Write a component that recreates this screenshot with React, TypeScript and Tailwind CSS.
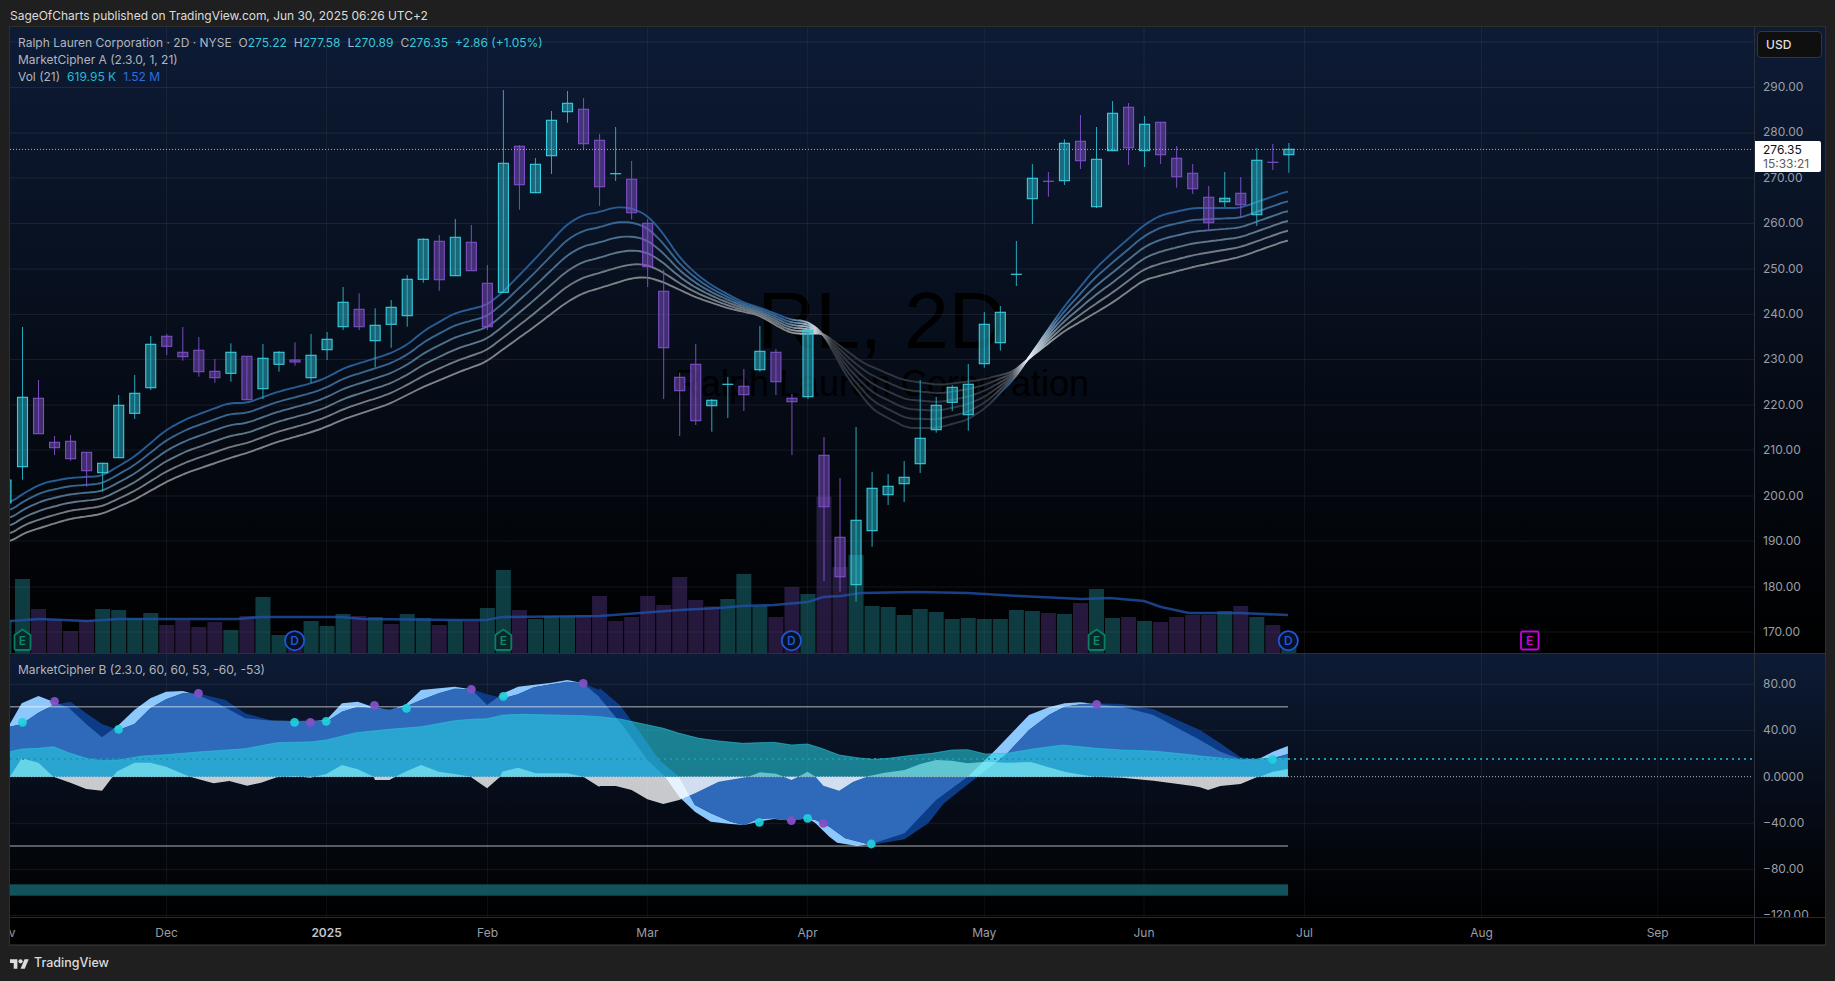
import React from "react";

type Pt = [number, number];

// trace helpers: points were read from 620px wide crops, so they get scaled back to page px
const crop = (pts: Pt[], x0: number, y0: number, sx = 2.529): Pt[] =>
  pts.map(([x, y]) => [x0 + x / sx, y0 + y / 3] as Pt);

const X = (i: number) => 22.5 + 16.03 * i;

// high, body top, body bottom, low, direction
const CANDLES: [number, number, number, number, "u" | "d"][] = [
  [327, 397.3, 466.7, 479.7, "u"], [380, 398.3, 433.7, 433.7, "d"], [436, 442.3, 447.7, 455, "d"], [435, 441.3, 458.7, 460.7, "d"],
  [452, 452.3, 470.7, 486.7, "d"], [462.7, 463.3, 472.7, 491.7, "u"], [395, 405.3, 457.7, 457.7, "u"], [375, 393.3, 413.3, 419, "u"],
  [336, 344.3, 387.7, 390, "u"], [334, 336.3, 346.3, 355, "d"], [327, 352.3, 356.7, 360.7, "d"], [337, 350.3, 371.7, 376.7, "d"],
  [359, 371.3, 377.7, 382.7, "d"], [343.3, 352.3, 373.3, 381.7, "u"], [356, 356.3, 399.7, 400, "d"], [344, 358.3, 388.7, 399, "u"],
  [351, 352.3, 364.3, 371.7, "u"], [342.3, 360, 362, 365.7, "d"], [334, 355.3, 377.7, 382.7, "u"], [332, 339.3, 349.7, 360, "u"],
  [287, 302.3, 326.7, 330, "u"], [293.3, 309.3, 326.7, 330, "d"], [308.3, 325.3, 340.7, 367.3, "u"], [300, 307.3, 324.3, 347.7, "u"],
  [275, 279.3, 315.7, 326.7, "u"], [238.3, 239.3, 279.3, 282.7, "u"], [235, 241.3, 279.7, 290.7, "d"], [219, 237.3, 275.7, 276, "u"],
  [225, 242.3, 270.7, 271, "d"], [265, 283.3, 326.7, 330, "d"], [90, 163.3, 292.3, 292.5, "u"], [145, 146.3, 184.7, 209.7, "d"],
  [158, 164.3, 192.7, 193, "u"], [111, 120.3, 155.7, 174, "u"], [91, 103.3, 111.7, 122.7, "u"], [98, 109.3, 143.7, 149.3, "d"],
  [134, 140.3, 186.7, 206, "d"], [127, 173.7, 173.7, 181, "u"], [161, 179.3, 212.7, 219.3, "d"], [219, 223.3, 266.7, 287, "d"],
  [270, 291.3, 347.7, 399, "d"], [372.7, 377.3, 390.7, 436, "d"], [344, 364.3, 420.7, 425, "d"], [399, 400.3, 405.7, 431.7, "u"],
  [377, 384.3, 384.3, 418, "u"], [369, 386.3, 394.7, 411, "d"], [326, 351.3, 369.7, 371.7, "u"], [349, 352.3, 381.7, 395, "d"],
  [394, 398.3, 401.7, 455, "d"], [324, 330.3, 396.7, 399, "u"], [437, 455.3, 506.7, 581, "d"], [478, 537.3, 576.7, 591.7, "d"],
  [427, 520.3, 584.7, 601.7, "u"], [472, 488.3, 530.7, 546.7, "u"], [474, 486.3, 494.7, 505, "u"], [461, 477.3, 483.7, 502, "u"],
  [380, 438.3, 463.7, 473, "u"], [397, 405.3, 429.7, 432.7, "u"], [385, 387.3, 402.3, 411, "u"], [364, 384.3, 414.7, 430.7, "u"],
  [312, 324.3, 363.7, 367.7, "u"], [306, 312.3, 342.7, 350.7, "u"], [241, 274.3, 274.3, 286, "u"], [164, 178.3, 198.7, 224, "u"],
  [172, 181.3, 181.3, 196.7, "d"], [139.3, 143.3, 180.7, 185, "u"], [115, 141.3, 160.7, 169, "d"], [127, 159.3, 206.7, 208, "u"],
  [101, 113.3, 150.7, 151, "u"], [103, 107.3, 147.7, 165, "d"], [116, 124.3, 150.7, 167, "u"], [122, 122.3, 154.7, 164, "d"],
  [146, 158.3, 176.7, 187.7, "d"], [164, 173.3, 188.7, 194, "d"], [186, 197.3, 222.7, 231, "d"], [172, 198.3, 201.7, 207, "u"],
  [177, 193.3, 204.7, 217.7, "d"], [148.3, 160.3, 214.7, 226, "u"], [144, 162.3, 162.3, 170, "d"], [143, 149.3, 154.7, 172.7, "u"],
];

// bar tops in crop rows, y = 330 + v / 3
const VOLUME: [number, "u" | "d"][] = [
  [747, "u"], [837, "d"], [867, "d"], [903, "d"], [870, "d"], [837, "u"], [840, "u"], [864, "u"], [849, "u"], [885, "d"],
  [870, "d"], [891, "d"], [876, "d"], [900, "u"], [858, "d"], [801, "u"], [915, "u"], [915, "d"], [873, "u"], [888, "u"],
  [852, "u"], [858, "d"], [861, "u"], [882, "d"], [852, "u"], [864, "u"], [885, "d"], [870, "u"], [873, "d"], [834, "u"],
  [720, "u"], [840, "d"], [867, "u"], [858, "u"], [858, "u"], [855, "d"], [798, "d"], [873, "d"], [861, "d"], [798, "d"],
  [825, "d"], [741, "d"], [810, "d"], [829, "d"], [807, "u"], [732, "u"], [828, "u"], [861, "d"], [771, "d"], [792, "u"],
  [500, "d"], [711, "d"], [675, "u"], [828, "u"], [831, "u"], [855, "u"], [837, "u"], [846, "u"], [867, "u"], [864, "u"],
  [867, "u"], [867, "u"], [840, "u"], [843, "u"], [849, "d"], [852, "u"], [819, "d"], [777, "u"], [864, "u"], [861, "d"],
  [873, "u"], [876, "d"], [861, "d"], [855, "d"], [855, "d"], [843, "u"], [828, "d"], [861, "u"], [885, "d"], [950, "u"],
];

const VOL_MA: Pt[] = [
  [10, 621], [40, 619], [87, 621], [119, 619], [237, 619], [261, 617], [340, 617], [364, 619], [459, 620], [486, 620], [502, 617],
  [600, 616], [640, 613], [679, 610], [719, 608], [742, 606], [774, 605], [808, 602], [823, 597], [841, 596], [861, 593], [916, 592],
  [968, 593], [1019, 596], [1082, 599], [1110, 598], [1144, 601], [1161, 607], [1189, 613], [1220, 613], [1240, 613], [1288, 615],
];

const RIBBON_TOP: Pt[] = [
  [10, 503], [24, 493], [43, 483], [69, 478], [102, 476], [134, 457], [166, 430], [186, 419], [229, 403], [247, 403], [277, 392],
  [312, 383], [326, 378], [344, 368], [389, 354], [407, 345], [425, 330], [455, 313], [487, 305], [503, 292], [534, 260], [567, 224],
  [583, 215], [600, 212], [615, 207], [631, 208], [647, 215], [663, 233], [679, 257], [695, 273], [711, 285], [742, 302], [758, 307],
  [774, 313], [791, 320], [807, 321], [823, 333], [847, 377], [873, 410], [907, 428], [937, 428], [967, 420], [987, 407], [1000, 393], [1015, 378],
  [1027, 360], [1063, 308], [1094, 270], [1112, 253], [1144, 225], [1161, 215], [1193, 208], [1240, 208], [1257, 202], [1288, 191],
];
const RIBBON_BOTTOM: Pt[] = [
  [10, 542], [24, 533], [43, 527], [69, 519], [102, 514], [134, 500], [166, 482], [186, 473], [233, 457], [247, 453], [277, 442],
  [312, 432], [326, 427], [344, 419], [389, 404], [423, 387], [459, 372], [486, 362], [502, 350], [530, 330], [567, 302], [583, 293],
  [600, 288], [632, 278], [647, 277], [663, 282], [695, 297], [727, 308], [758, 315], [790, 333], [807, 334], [823, 333], [863, 363],
  [903, 380], [940, 385], [980, 380], [1013, 372], [1027, 360], [1063, 332], [1112, 303], [1144, 280], [1193, 267], [1240, 257], [1288, 240],
];
const RIBBON_COLORS = ["#275c94", "#396690", "#4c6f8e", "#5f7789", "#727a82", "#7f8286"];

const interp = (pts: Pt[], x: number) => {
  if (x <= pts[0][0]) return pts[0][1];
  for (let i = 1; i < pts.length; i++) {
    if (x <= pts[i][0]) {
      const [x0, y0] = pts[i - 1];
      const [x1, y1] = pts[i];
      return y0 + ((y1 - y0) * (x - x0)) / (x1 - x0);
    }
  }
  return pts[pts.length - 1][1];
};

// rounds off the corners of the traced lines
const smooth = (pts: Pt[], x: number) => {
  let sum = 0;
  for (let d = -6; d <= 6; d += 3) sum += interp(pts, x + d);
  return sum / 5;
};

const line = (pts: Pt[]) => pts.map(([x, y], i) => `${i ? "L" : "M"}${x.toFixed(1)} ${y.toFixed(1)}`).join("");
const BASE = 776.7;
const area = (pts: Pt[]) => `M${pts[0][0].toFixed(1)} ${BASE}` + pts.map(([x, y]) => `L${x.toFixed(1)} ${y.toFixed(1)}`).join("") + `L${pts[pts.length - 1][0].toFixed(1)} ${BASE}Z`;
const stopAt = (x: number) => (x - 10) / 1278;

const WAVE_LEAD: Pt[] = [
  ...crop([[0, 222], [25, 222], [55, 160], [97, 138], [135, 155], [175, 175], [218, 222], [258, 262], [300, 225], [340, 180], [380, 145], [420, 125], [462, 123], [500, 135], [550, 160], [620, 205], [690, 212], [745, 213], [800, 212], [825, 210], [865, 160], [905, 155], [945, 172], [985, 180], [1025, 165], [1065, 120], [1150, 110], [1192, 118], [1232, 165], [1273, 130], [1310, 110], [1395, 98], [1435, 90], [1475, 100], [1515, 140]], 0, 650),
  ...crop([[0, 145], [60, 230], [120, 330], [165, 380], [200, 440], [240, 485], [280, 515], [330, 522], [365, 525], [400, 515], [440, 507], [484, 512], [525, 505], [545, 520], [580, 560], [600, 578], [650, 588], [686, 582], [770, 550], [850, 450], [930, 380], [1000, 300], [1085, 195], [1135, 172], [1175, 160], [1215, 157], [1255, 162], [1320, 170], [1400, 195], [1470, 240]], 600, 650),
  ...crop([[0, 270], [50, 305], [100, 327], [140, 330], [180, 305], [217, 288]], 1200, 650, 2.469),
];
const WAVE_LAG: Pt[] = [
  ...crop([[0, 230], [25, 230], [55, 222], [97, 188], [135, 165], [178, 155], [218, 190], [258, 222], [300, 240], [340, 222], [380, 175], [420, 148], [462, 130], [500, 130], [570, 150], [620, 190], [690, 212], [745, 213], [800, 212], [825, 215], [865, 185], [905, 170], [945, 175], [985, 178], [1025, 170], [1065, 150], [1110, 130], [1150, 116], [1192, 118], [1232, 133], [1273, 145], [1310, 133], [1350, 112], [1395, 103], [1435, 95], [1475, 100], [1515, 120]], 0, 650),
  ...crop([[0, 115], [50, 165], [100, 245], [150, 330], [200, 380], [240, 465], [280, 490], [330, 515], [365, 525], [400, 507], [440, 505], [484, 512], [525, 505], [545, 510], [580, 530], [620, 565], [686, 585], [770, 568], [830, 520], [870, 460], [950, 385], [1000, 340], [1030, 310], [1085, 240], [1135, 195], [1175, 170], [1215, 163], [1255, 160], [1320, 162], [1400, 178], [1470, 215]], 600, 650),
  ...crop([[0, 240], [50, 280], [100, 322], [140, 327], [180, 325], [217, 312]], 1200, 650, 2.469),
];
const FLOW_SLOW: Pt[] = [
  ...crop([[25, 305], [55, 297], [97, 295], [135, 290], [178, 310], [218, 325], [258, 332], [300, 330], [360, 318], [420, 314], [500, 306], [620, 296], [700, 278], [790, 275], [825, 270], [900, 248], [985, 238], [1065, 230], [1150, 212], [1192, 208], [1232, 206], [1273, 195], [1320, 193], [1395, 195], [1475, 197]], 0, 650),
  ...crop([[0, 200], [50, 207], [110, 222], [160, 235], [200, 250], [250, 265], [300, 273], [360, 280], [440, 277], [485, 285], [525, 282], [560, 295], [605, 315], [650, 323], [690, 328], [730, 325], [780, 317], [840, 310], [890, 300], [930, 299], [975, 312], [1030, 310], [1090, 298], [1170, 285], [1255, 295], [1320, 300], [1400, 303], [1500, 315]], 600, 650),
  ...crop([[0, 318], [100, 330], [140, 327], [217, 325]], 1200, 650, 2.469),
];
const FLOW_FAST: Pt[] = [
  ...crop([[25, 380], [55, 325], [97, 338], [135, 380], [178, 398], [218, 417], [258, 422], [285, 380], [295, 365], [340, 338], [380, 338], [420, 350], [480, 380], [540, 400], [580, 393], [625, 407], [660, 398], [700, 382], [745, 378], [785, 383], [825, 372], [865, 345], [905, 358], [945, 380], [948, 390], [985, 390], [1000, 380], [1025, 365], [1065, 345], [1110, 365], [1150, 372], [1190, 380], [1232, 415], [1265, 380], [1270, 365], [1310, 353], [1355, 370], [1435, 370], [1475, 380], [1515, 410]], 0, 650),
  ...crop([[0, 408], [40, 408], [80, 420], [120, 448], [160, 462], [200, 450], [240, 430], [300, 395], [375, 380], [405, 367], [445, 371], [465, 380], [484, 390], [505, 378], [525, 365], [545, 380], [565, 407], [605, 422], [640, 395], [680, 378], [720, 368], [770, 360], [810, 342], [850, 330], [890, 332], [930, 340], [975, 335], [1030, 338], [1090, 336], [1130, 350], [1180, 367], [1250, 380], [1320, 383], [1400, 392], [1500, 408]], 600, 650),
  ...crop([[0, 412], [20, 420], [50, 408], [100, 402], [140, 382], [148, 380], [180, 365], [217, 357]], 1200, 650, 2.469),
];

const DOTS_CYAN: Pt[] = [
  ...crop([[57, 217], [300, 238], [745, 217], [825, 214], [1028, 175], [1273, 139]], 0, 650),
  ...crop([[403, 517], [525, 505], [686, 582]], 600, 650),
  ...crop([[179, 328]], 1200, 650, 2.469),
];
const DOTS_PURPLE: Pt[] = [
  ...crop([[138, 154], [502, 130], [785, 217], [947, 166], [1192, 118], [1475, 100]], 0, 650),
  ...crop([[484, 512], [565, 520], [1256, 163]], 600, 650),
];

const MONTHS: [string, number, boolean][] = [
  ["Nov", 4, false], ["Dec", 166.5, false], ["2025", 326.6, true], ["Feb", 487.5, false], ["Mar", 647.4, false], ["Apr", 807.6, false],
  ["May", 984.3, false], ["Jun", 1144, false], ["Jul", 1304.5, false], ["Aug", 1481.5, false], ["Sep", 1657.7, false],
];
const GRID_X = MONTHS.slice(1).map((m) => m[1]);
const PRICE_Y = [42, 87.5, 133, 178, 223.5, 269, 314.5, 359.5, 405, 450, 496, 541, 587, 632];
const PRICE_LABELS: [string, number][] = [
  ["290.00", 87], ["280.00", 132], ["270.00", 178], ["260.00", 223], ["250.00", 269], ["240.00", 314], ["230.00", 359], ["220.00", 405],
  ["210.00", 450], ["200.00", 496], ["190.00", 541], ["180.00", 587], ["170.00", 632],
];
const OSC_Y = [684.3, 730.3, 823.3, 869.3, 915.5];
const OSC_LABELS: [string, number][] = [
  ["80.00", 683.5], ["40.00", 729.5], ["0.0000", 776.5], ["−40.00", 822.5], ["−80.00", 868.5], ["−120.00", 915],
];

function Grid({ ys, top, bottom }: { ys: number[]; top: number; bottom: number }) {
  return (
    <g stroke="#ffffff" strokeOpacity="0.07" strokeWidth="1">
      {ys.map((y) => (
        <line key={y} x1="10" x2="1754" y1={y} y2={y} />
      ))}
      {GRID_X.map((x) => (
        <line key={x} x1={x} x2={x} y1={top} y2={bottom} strokeOpacity="0.055" />
      ))}
    </g>
  );
}

function Candles() {
  return (
    <g>
      {/* cut off candle on the left edge */}
      <rect x="5" y="480" width="6" height="23" fill="#2cb7cb" fillOpacity="0.5" stroke="#3dd3e0" />
      {CANDLES.map(([h, t, b, l, d], i) => {
        const x = X(i);
        const stroke = d === "u" ? "#39cfdf" : "#7c50c6";
        const wick = d === "u" ? "#28a9bb" : "#7a4ec0";
        const fill = d === "u" ? "#2cb7cb" : "#7a4fc2";
        return (
          <g key={i}>
            <line x1={x} x2={x} y1={h} y2={l} stroke={wick} strokeWidth="1" />
            {t === b ? (
              <line x1={x - 5.5} x2={x + 5.5} y1={t} y2={t} stroke={stroke} strokeWidth="1.2" />
            ) : (
              <rect x={x - 5} y={t} width="10" height={b - t} fill={fill} fillOpacity="0.52" stroke={stroke} strokeWidth="1.1" />
            )}
          </g>
        );
      })}
    </g>
  );
}

function Ribbon() {
  return (
    <g fill="none" strokeWidth="1.9" strokeLinejoin="round">
      <defs>
        {RIBBON_COLORS.map((c, k) => (
          <linearGradient key={c} id={`ribbon-${k}`} gradientUnits="userSpaceOnUse" x1="10" x2="1288" y1="0" y2="0">
            <stop offset={stopAt(785)} stopColor={c} />
            <stop offset={stopAt(815)} stopColor="#cfd3d9" />
            <stop offset={stopAt(832)} stopColor="#32363d" />
            <stop offset={stopAt(990)} stopColor={k === 0 ? "#2c3648" : "#32363d"} />
            <stop offset={stopAt(1012)} stopColor={k === 0 ? "#2a639e" : "#50545c"} />
            <stop offset={stopAt(1028)} stopColor="#eef3f9" />
            <stop offset={stopAt(1038)} stopColor="#b6c3d0" />
            <stop offset={stopAt(1060)} stopColor={c} />
          </linearGradient>
        ))}
      </defs>
      {RIBBON_COLORS.map((_, k) => {
        const t = k / 5;
        const pts: Pt[] = [];
        for (let x = 10; x <= 1288; x += 3) {
          pts.push([x, smooth(RIBBON_TOP, x) * (1 - t) + smooth(RIBBON_BOTTOM, x) * t]);
        }
        return <path key={k} d={line(pts)} stroke={`url(#ribbon-${k})`} />;
      })}
    </g>
  );
}

function EarningsFlag({ x }: { x: number }) {
  return (
    <g>
      <path
        d={`M${x - 8} 648.5 V635 L${x} 629.5 L${x + 8} 635 V648.5 Q${x + 8} 650 ${x + 6.5} 650 H${x - 6.5} Q${x - 8} 650 ${x - 8} 648.5 Z`}
        fill="#0b2628"
        stroke="#0a7d66"
        strokeWidth="1.8"
      />
      <text x={x} y="645" textAnchor="middle" fontSize="12" fontWeight="600" fill="#0a8a70">E</text>
    </g>
  );
}

function DividendFlag({ x }: { x: number }) {
  return (
    <g>
      <circle cx={x} cy="640.7" r="9.6" fill="#081024" stroke="#1d56d8" strokeWidth="1.8" />
      <text x={x} y="645" textAnchor="middle" fontSize="12" fontWeight="600" fill="#1d56d8">D</text>
    </g>
  );
}

function PricePane() {
  return (
    <div className="relative h-[626px] flex bg-[linear-gradient(to_bottom,#0d1b35,#000000)]">
      <div className="relative flex-1 overflow-hidden">
        <div className="absolute inset-x-0 top-[254px] flex flex-col items-center text-black [font-family:'Liberation_Sans',Arial,sans-serif]">
          <div className="text-[80px] leading-[80px]">RL, 2D</div>
          <div className="mt-[5px] text-[36px] leading-[36px]">Ralph Lauren Corporation</div>
        </div>
        <svg className="absolute inset-0 h-full w-full" viewBox="10 27 1744 626">
          <Grid ys={PRICE_Y} top={27} bottom={653} />
          <rect x="5" y={330 + 870 / 3} width="6.5" height="40" fill="#123f47" />
          {VOLUME.map(([v, d], i) => (
            <rect
              key={i}
              x={X(i) - 7.5}
              y={330 + v / 3}
              width="15"
              height={653 - (330 + v / 3)}
              fill={d === "u" ? "#2cc3cf" : "#7a4fc2"}
              fillOpacity="0.3"
            />
          ))}
          <path d={line(VOL_MA)} fill="none" stroke="#1f50a8" strokeWidth="2.6" strokeOpacity="0.8" />
          <Ribbon />
          <Candles />
          <line x1="10" x2="1752" y1="149.4" y2="149.4" stroke="#aeb6c0" strokeWidth="1" strokeDasharray="1 2" />
          <EarningsFlag x={22.5} />
          <EarningsFlag x={503.3} />
          <EarningsFlag x={1096.6} />
          <DividendFlag x={294.6} />
          <DividendFlag x={791.4} />
          <DividendFlag x={1288.3} />
          <rect x="1521" y="631.5" width="17.5" height="18" rx="1.5" fill="#000" stroke="#c800e0" strokeWidth="1.8" />
          <text x="1529.7" y="645" textAnchor="middle" fontSize="12" fontWeight="600" fill="#c800e0">E</text>
        </svg>
        <div className="absolute left-2 top-[7px] text-xs leading-[17px] text-[#b2b5be]">
          <div className="flex">
            <span>Ralph Lauren Corporation · 2D · NYSE</span>
            <span className="ml-[7px]">O<span className="text-[#35c7da]">275.22</span></span>
            <span className="ml-[7px]">H<span className="text-[#35c7da]">277.58</span></span>
            <span className="ml-[7px]">L<span className="text-[#35c7da]">270.89</span></span>
            <span className="ml-[7px]">C<span className="text-[#35c7da]">276.35</span></span>
            <span className="ml-[7px] text-[#35c7da]">+2.86 (+1.05%)</span>
          </div>
          <div>MarketCipher A (2.3.0, 1, 21)</div>
          <div className="flex">
            <span>Vol (21)</span>
            <span className="ml-[7px] text-[#22bcd4]">619.95 K</span>
            <span className="ml-[7px] text-[#2a6fe0]">1.52 M</span>
          </div>
        </div>
      </div>
      <div className="relative w-[71px] border-l border-[#2a2f3a] text-xs text-[#9a9ea6]">
        {PRICE_LABELS.map(([label, y]) => (
          <div key={label} className="absolute left-2 -translate-y-1/2" style={{ top: y - 27 }}>
            {label}
          </div>
        ))}
        <div className="absolute left-[2px] top-[4px] flex h-[27px] w-[65px] items-center rounded border border-[#33363c] bg-[#0f0f0f] pl-2 font-medium text-[#dedede]">
          USD
        </div>
        <div className="absolute left-0 top-[114px] h-[31px] w-[66px] rounded-r-[2px] bg-white pl-2 leading-[14px]">
          <div className="pt-[2px] text-[#111]">276.35</div>
          <div className="text-[#5c5c5c]">15:33:21</div>
        </div>
      </div>
    </div>
  );
}

function OscillatorPane() {
  return (
    <div className="relative h-[264px] flex border-t border-[#2a2e39] bg-[linear-gradient(to_bottom,#0d1b35,#000000)]">
      <div className="relative flex-1 overflow-hidden">
        <svg className="absolute inset-0 h-full w-full" viewBox="10 654 1744 263">
          <defs>
            <clipPath id="lead-clip">
              <path d={area(WAVE_LEAD)} />
            </clipPath>
            <clipPath id="above-zero">
              <rect x="0" y="654" width="1400" height={BASE - 654} />
            </clipPath>
            <clipPath id="below-zero">
              <rect x="0" y={BASE} width="1400" height="140" />
            </clipPath>
          </defs>
          <Grid ys={OSC_Y} top={654} bottom={917} />
          <path d={area(WAVE_LEAD)} fill="#8cc8fb" />
          <path d={area(WAVE_LAG)} fill="#0d3c86" />
          <path d={area(WAVE_LAG)} fill="#2e69ba" clipPath="url(#lead-clip)" />
          <path d={area(FLOW_SLOW)} fill="#28d1e4" fillOpacity="0.58" />
          <path d={line(FLOW_SLOW)} fill="none" stroke="#28c4d8" strokeOpacity="0.6" strokeWidth="1" />
          <path d={area(FLOW_FAST)} fill="#86ecf2" fillOpacity="0.65" clipPath="url(#above-zero)" />
          <path d={area(FLOW_FAST)} fill="#ffffff" fillOpacity="0.78" clipPath="url(#below-zero)" />
          <line x1="10" x2="1288" y1="706.7" y2="706.7" stroke="#ffffff" strokeOpacity="0.45" strokeWidth="1.6" />
          <line x1="10" x2="1288" y1="846" y2="846" stroke="#ffffff" strokeOpacity="0.45" strokeWidth="1.6" />
          <line x1="10" x2="1752" y1="759" y2="759" stroke="#1a9aaa" strokeWidth="1.8" strokeDasharray="2 4" />
          <line x1="10" x2="1752" y1={BASE} y2={BASE} stroke="#b8bcc2" strokeWidth="1" strokeDasharray="1 2" />
          <rect x="10" y="884.3" width="1278" height="11.4" fill="#12525a" />
          {DOTS_CYAN.map(([x, y]) => (
            <circle key={x} cx={x} cy={y} r="4.4" fill="#1fd0de" fillOpacity="0.92" />
          ))}
          {DOTS_PURPLE.map(([x, y]) => (
            <circle key={x} cx={x} cy={y} r="4.4" fill="#8350c4" fillOpacity="0.95" />
          ))}
        </svg>
        <div className="absolute left-2 top-[7px] text-xs leading-[17px] text-[#b2b5be]">MarketCipher B (2.3.0, 60, 60, 53, -60, -53)</div>
      </div>
      <div className="relative w-[71px] overflow-hidden border-l border-[#2a2f3a] text-xs text-[#9a9ea6]">
        {OSC_LABELS.map(([label, y]) => (
          <div key={label} className="absolute left-2 -translate-y-1/2" style={{ top: y - 654 }}>
            {label}
          </div>
        ))}
      </div>
    </div>
  );
}

function TimeAxis() {
  return (
    <div className="flex h-[27px] border-t border-[#2a2a2a] bg-black text-xs text-[#9a9ea6]">
      <div className="relative flex-1 overflow-hidden">
        {MONTHS.map(([label, x, bold]) => (
          <span
            key={label}
            className={bold ? "absolute top-[7px] -translate-x-1/2 font-semibold text-[#c4c7cf]" : "absolute top-[7px] -translate-x-1/2"}
            style={{ left: x - 10 }}
          >
            {label}
          </span>
        ))}
      </div>
      <div className="w-[71px] border-l border-[#2a2f3a]" />
    </div>
  );
}

export default function App() {
  return (
    <div className="flex h-[981px] flex-col overflow-hidden bg-[#1f1f1f] [font-family:Inter,sans-serif]">
      <div className="flex h-[26px] items-center pl-[10px] pt-[5px] text-xs tracking-[-0.03px] text-[#dcdcdc]">
        SageOfCharts published on TradingView.com, Jun 30, 2025 06:26 UTC+2
      </div>
      <div className="mx-[9px] flex h-[920px] flex-col border border-[#2e2e2e]">
        <PricePane />
        <OscillatorPane />
        <TimeAxis />
      </div>
      <div className="flex flex-1 items-center gap-[5px] pl-[10px] text-[12.5px] font-medium text-[#dcdcdc]">
        <svg width="19" height="10" viewBox="0 4 36 18" fill="#dcdcdc">
          <path d="M14 22H7V11H0V4h14v18ZM28 22h-8l7.5-18h8L28 22Z" />
          <circle cx="20" cy="8" r="4" />
        </svg>
        <span>TradingView</span>
      </div>
    </div>
  );
}
